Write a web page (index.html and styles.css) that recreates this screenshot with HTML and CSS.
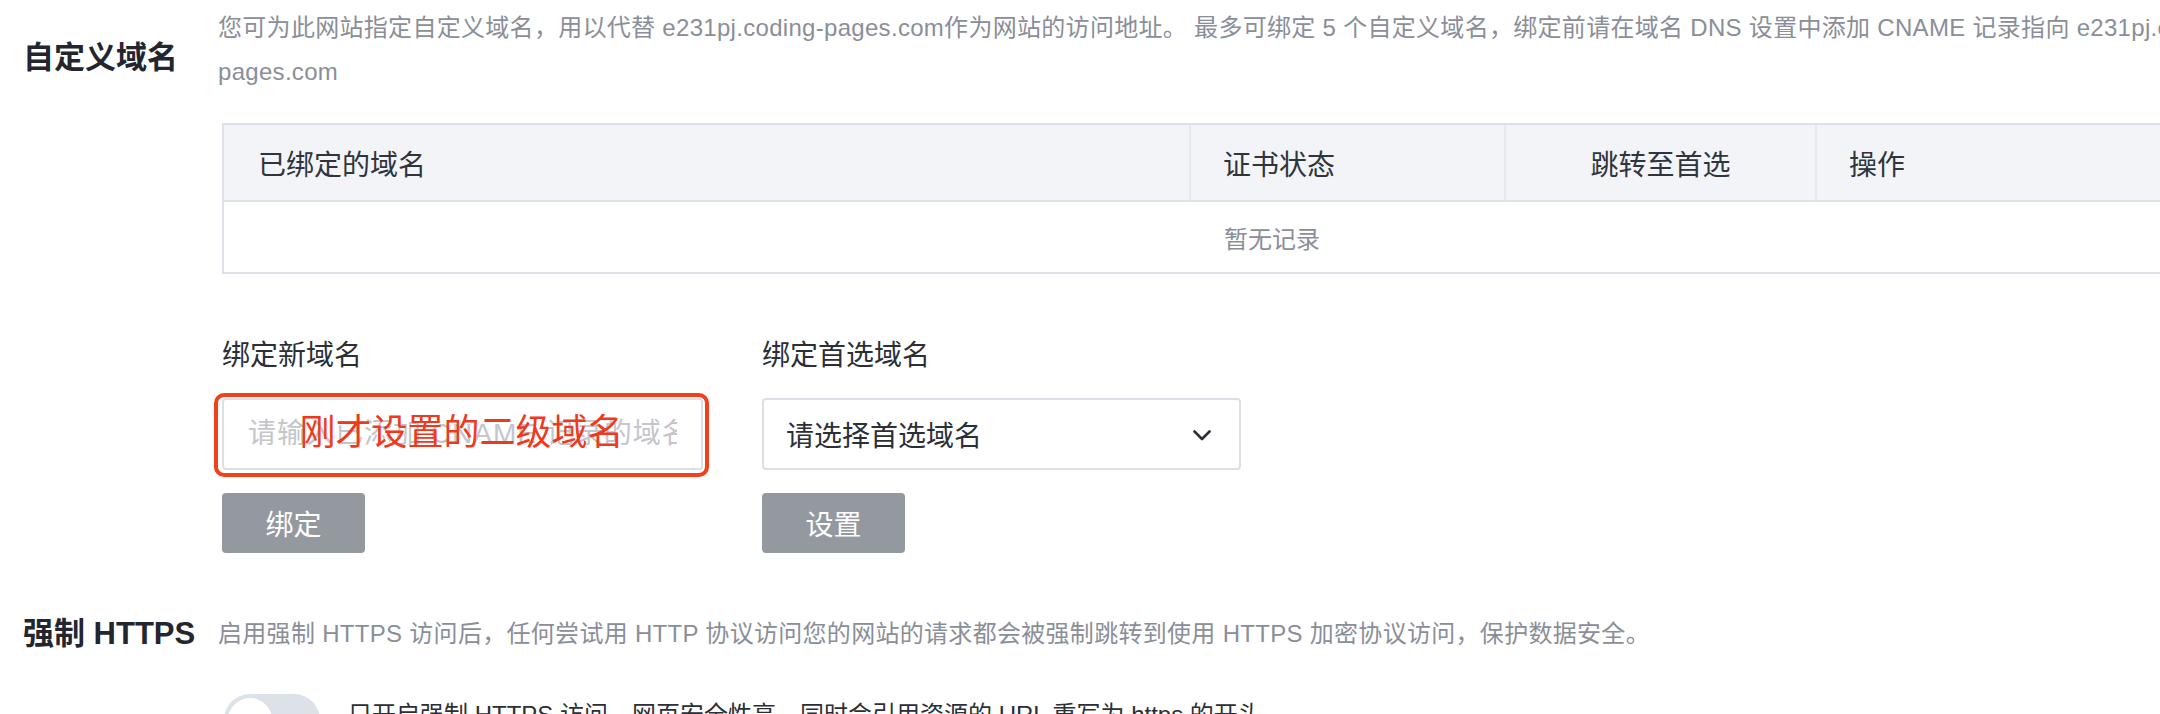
FILE: index.html
```html
<!DOCTYPE html>
<html lang="zh-CN">
<head>
<meta charset="utf-8">
<title>Pages 设置</title>
<link rel="stylesheet" href="styles.css">
</head>
<body>
<main class="page">
  <section class="setting">
    <h2 class="setting-title setting-title--offset">自定义域名</h2>
    <div class="setting-body">
      <p class="setting-desc">您可为此网站指定自定义域名，用以代替 e231pj.coding-pages.com作为网站的访问地址。 最多可绑定 5 个自定义域名，绑定前请在域名 DNS 设置中添加 CNAME 记录指向 e231pj.coding-<br>pages.com</p>

      <table class="domain-table">
        <colgroup>
          <col class="col-domain">
          <col class="col-cert">
          <col class="col-redirect">
          <col class="col-action">
        </colgroup>
        <thead>
          <tr>
            <th>已绑定的域名</th>
            <th>证书状态</th>
            <th class="th-center">跳转至首选</th>
            <th>操作</th>
          </tr>
        </thead>
        <tbody>
          <tr>
            <td class="empty" colspan="4">暂无记录</td>
          </tr>
        </tbody>
      </table>

      <div class="forms">
        <div class="form-col">
          <label class="form-label">绑定新域名</label>
          <div class="field-wrap">
            <input class="text-input" type="text" placeholder="请输入已添加 CNAME 记录的域名">
            <div class="annotation">
              <span class="annotation-text">刚才设置的二级域名</span>
            </div>
          </div>
          <button class="btn" type="button">绑定</button>
        </div>
        <div class="form-col">
          <label class="form-label">绑定首选域名</label>
          <div class="select">
            <span class="select-text">请选择首选域名</span>
            <svg class="chevron" width="18" height="11" viewBox="0 0 18 11" aria-hidden="true">
              <path d="M1.5 1.5 L9 9 L16.5 1.5" fill="none" stroke="#2b2f36" stroke-width="2.6" stroke-linecap="round" stroke-linejoin="round"/>
            </svg>
          </div>
          <button class="btn" type="button">设置</button>
        </div>
      </div>
    </div>
  </section>

  <section class="setting setting--https">
    <h2 class="setting-title">强制 HTTPS</h2>
    <div class="setting-body">
      <p class="setting-desc">启用强制 HTTPS 访问后，任何尝试用 HTTP 协议访问您的网站的请求都会被强制跳转到使用 HTTPS 加密协议访问，保护数据安全。</p>
      <div class="toggle-row">
        <span class="toggle"><span class="toggle-knob"></span></span>
        <span class="toggle-label">只开启强制 HTTPS 访问，网页安全性高，同时会引用资源的 URL 重写为 https 的开头</span>
      </div>
    </div>
  </section>
</main>
</body>
</html>
```

FILE: styles.css
```css
html, body {
  margin: 0;
  padding: 0;
  background: #ffffff;
}

body {
  width: 2160px;
  height: 714px;
  overflow: hidden;
  font-family: "Liberation Sans", "Noto Sans CJK SC", sans-serif;
  color: #2b2f36;
}

.page {
  padding-top: 6px;
}

.setting {
  display: flex;
  align-items: flex-start;
}

.setting-title {
  flex: 0 0 195px;
  margin: 0;
  padding-left: 23px;
  font-size: 31px;
  line-height: 44px;
  font-weight: 600;
  color: #23262e;
  white-space: nowrap;
}

.setting-title--offset {
  margin-top: 30px;
}

.setting-body {
  flex: 1 1 auto;
  min-width: 0;
}

.setting-desc {
  margin: 0;
  font-size: 24px;
  line-height: 44px;
  letter-spacing: 0.3px;
  color: #8a8e98;
  white-space: nowrap;
}

/* table */
.domain-table {
  margin: 29px 0 0 4px;
  width: 2096px;
  border-collapse: separate;
  border-spacing: 0;
  border: 2px solid #dde2e8;
  table-layout: fixed;
}

.col-domain { width: 965px; }
.col-cert { width: 315px; }
.col-redirect { width: 311px; }
.col-action { width: 505px; }

.domain-table th {
  height: 77px;
  padding: 0 0 0 32px;
  background: #f2f4f7;
  border-bottom: 2px solid #dde2e8;
  border-left: 2px solid #e6e9ee;
  text-align: left;
  font-size: 28px;
  font-weight: 400;
  color: #30343d;
  box-sizing: border-box;
}

.domain-table th:first-child {
  border-left: 0;
  padding-left: 34px;
}

.domain-table .th-center {
  text-align: center;
  padding-left: 0;
}

.domain-table td.empty {
  height: 70px;
  padding: 0;
  text-align: center;
  font-size: 24px;
  color: #8a8e98;
}

/* forms */
.forms {
  display: flex;
  gap: 59px;
  margin: 62px 0 0 4px;
}

.form-col {
  display: flex;
  flex-direction: column;
  align-items: flex-start;
}

.form-col:first-child { width: 481px; }
.form-col:last-child { width: 479px; }

.form-label {
  font-size: 28px;
  line-height: 40px;
  color: #2b2f36;
}

.field-wrap {
  position: relative;
  width: 100%;
  margin-top: 22px;
}

.text-input {
  display: block;
  width: 100%;
  height: 72px;
  box-sizing: border-box;
  padding: 0 24px;
  border: 2px solid #dcdfe5;
  border-radius: 4px;
  background: #fff;
  font-family: "Liberation Sans", "Noto Sans CJK SC", sans-serif;
  font-size: 28px;
  letter-spacing: 1px;
  color: #2b2f36;
  outline: none;
}

.text-input::placeholder {
  color: #c3c6cc;
}

.annotation {
  position: absolute;
  left: -8px;
  top: -5px;
  right: -6px;
  bottom: -7px;
  border: 4px solid #f2401b;
  border-radius: 10px;
  display: flex;
  align-items: center;
  justify-content: center;
  pointer-events: none;
}

.annotation-text {
  font-family: "Noto Sans CJK SC", sans-serif;
  font-size: 36px;
  line-height: 40px;
  color: #f0391c;
  margin-top: -13px;
}

.select {
  display: flex;
  align-items: center;
  justify-content: space-between;
  width: 100%;
  height: 72px;
  box-sizing: border-box;
  margin-top: 22px;
  padding: 0 28px 0 22px;
  border: 2px solid #dcdfe5;
  border-radius: 4px;
  background: #fff;
}

.select-text {
  font-size: 28px;
  color: #2b2f36;
}

.chevron {
  display: block;
  margin-top: 2px;
}

.btn {
  margin-top: 23px;
  width: 143px;
  height: 60px;
  border: 0;
  border-radius: 4px;
  background: #94989f;
  color: #ffffff;
  font-family: "Liberation Sans", "Noto Sans CJK SC", sans-serif;
  font-size: 28px;
  padding: 0;
}

/* https */
.setting--https {
  margin-top: 59px;
}

.toggle-row {
  display: flex;
  align-items: flex-start;
  gap: 28px;
  margin: 38px 0 0 6px;
}

.toggle {
  position: relative;
  flex: 0 0 96px;
  height: 52px;
  border-radius: 26px;
  background: #dde1e8;
}

.toggle-knob {
  position: absolute;
  left: 4px;
  top: 4px;
  width: 44px;
  height: 44px;
  border-radius: 50%;
  background: #ffffff;
}

.toggle-label {
  padding-top: 5px;
  font-size: 24px;
  line-height: 32px;
  color: #2b2f36;
  white-space: nowrap;
}
```
